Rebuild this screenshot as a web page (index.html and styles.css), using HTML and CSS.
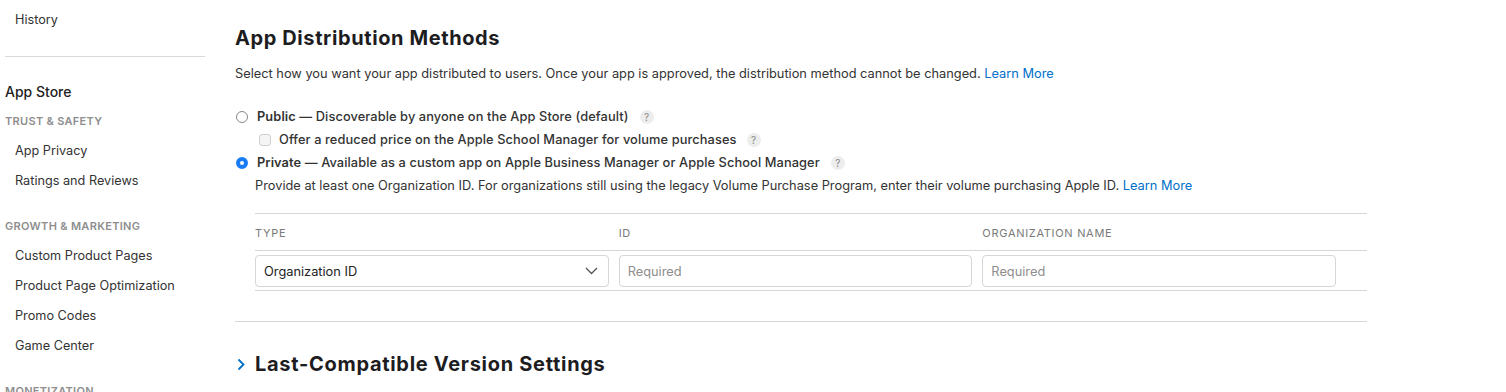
FILE: index.html
```html
<!DOCTYPE html>
<html lang="en">
<head>
    <meta charset="UTF-8">
    <title>App Distribution Methods</title>
    <link rel="stylesheet" href="styles.css">
</head>
<body>
    <div class="page">
        <nav class="sidebar">
            <a class="nav-item">History</a>
            <div class="nav-divider"></div>
            <div class="nav-section">App Store</div>
            <div class="nav-group">Trust &amp; Safety</div>
            <a class="nav-item">App Privacy</a>
            <a class="nav-item">Ratings and Reviews</a>
            <div class="nav-group">Growth &amp; Marketing</div>
            <a class="nav-item">Custom Product Pages</a>
            <a class="nav-item">Product Page Optimization</a>
            <a class="nav-item">Promo Codes</a>
            <a class="nav-item">Game Center</a>
            <div class="nav-group">Monetization</div>
        </nav>

        <main class="content">
            <h1>App Distribution Methods</h1>
            <p class="intro">Select how you want your app distributed to users. Once your app is approved, the distribution method cannot be changed. <a class="link">Learn More</a></p>

            <div class="options">
                <label class="option">
                    <span class="radio"></span>
                    <span><b>Public</b> — Discoverable by anyone on the App Store (default)</span>
                    <span class="help">?</span>
                </label>
                <label class="option sub">
                    <span class="checkbox"></span>
                    <span>Offer a reduced price on the Apple School Manager for volume purchases</span>
                    <span class="help">?</span>
                </label>
                <label class="option">
                    <span class="radio checked"></span>
                    <span><b>Private</b> — Available as a custom app on Apple Business Manager or Apple School Manager</span>
                    <span class="help">?</span>
                </label>
                <p class="option-note">Provide at least one Organization ID. For organizations still using the legacy Volume Purchase Program, enter their volume purchasing Apple ID. <a class="link">Learn More</a></p>
            </div>

            <div class="org-table">
                <div class="org-row head">
                    <div>Type</div>
                    <div>ID</div>
                    <div>Organization Name</div>
                    <div></div>
                </div>
                <div class="org-row">
                    <div class="select">
                        <span>Organization ID</span>
                        <svg width="13" height="8" viewBox="0 0 13 8"><path d="M1 1l5.5 5.5L12 1" fill="none" stroke="#555" stroke-width="1.3"/></svg>
                    </div>
                    <div class="input">Required</div>
                    <div class="input">Required</div>
                    <div></div>
                </div>
            </div>

            <div class="section-divider"></div>

            <h2 class="collapsed">
                <svg width="9" height="13" viewBox="0 0 9 13"><path d="M1.5 1.5l5 5-5 5" fill="none" stroke="#0070c9" stroke-width="1.8"/></svg>
                Last-Compatible Version Settings
            </h2>
        </main>
    </div>
</body>
</html>
```

FILE: styles.css
```css
body {
    margin: 0;
    font-family: Inter, "Noto Sans", sans-serif;
    color: #333;
    background: #fff;
    overflow: hidden;
}

.page {
    display: flex;
}

/* sidebar */

.sidebar {
    width: 200px;
    padding: 5px 0 0 5px;
    flex-shrink: 0;
    display: flex;
    flex-direction: column;
}

.nav-item {
    display: block;
    padding-left: 10px;
    height: 30px;
    line-height: 30px;
    font-size: 12.7px;
    color: #333;
}

.nav-divider {
    height: 1px;
    background: #d9d9d9;
    margin: 21px 0 23px;
}

.nav-section {
    font-size: 14px;
    font-weight: 500;
    line-height: 24px;
    color: #222;
}

.nav-group {
    margin-top: 7px;
    margin-bottom: 5px;
    line-height: 20px;
    font-size: 11px;
    font-weight: 600;
    letter-spacing: 0.3px;
    text-transform: uppercase;
    color: #8e8e8e;
}

.nav-item + .nav-group {
    margin-top: 20px;
}

/* main content */

.content {
    margin-left: 30px;
    width: 1132px;
    padding-top: 26px;
}

h1 {
    margin: 0;
    font-size: 20px;
    line-height: 24px;
    font-weight: 700;
    letter-spacing: 0.6px;
    color: #1d1d1f;
}

.intro {
    margin: 14px 0 0;
    font-size: 12.8px;
    line-height: 20px;
}

.link {
    color: #0070c9;
}

.options {
    margin-top: 21px;
    font-size: 12.8px;
}

.option {
    display: flex;
    align-items: center;
    height: 23px;
    gap: 9px;
    font-weight: 500;
    letter-spacing: 0.1px;
}

.option b {
    font-weight: 600;
}

.option.sub {
    padding-left: 24px;
    gap: 8px;
}

.radio {
    width: 12px;
    height: 12px;
    border: 1px solid #888;
    border-radius: 50%;
    margin-left: 1px;
    box-sizing: border-box;
    flex-shrink: 0;
}

.radio.checked {
    border: 4px solid #1a7cf5;
    background: #fff;
}

.checkbox {
    width: 12px;
    height: 12px;
    box-sizing: border-box;
    border: 1px solid #cfcfcf;
    border-radius: 3px;
    background: #f4f4f4;
    flex-shrink: 0;
}

.help {
    width: 14px;
    height: 14px;
    border-radius: 50%;
    background: #ededed;
    color: #888;
    font-size: 10px;
    font-weight: 400;
    line-height: 14px;
    text-align: center;
    margin-left: 2px;
}

.option-note {
    margin: 0;
    padding-left: 20px;
    line-height: 23px;
}

/* organization table */

.org-table {
    margin: 16px 0 0 20px;
    border-top: 1px solid #d6d6d6;
}

.org-row {
    display: grid;
    grid-template-columns: repeat(3, 1fr) 21px;
    gap: 10px;
    border-bottom: 1px solid #d6d6d6;
    padding: 4px 0 3px;
    font-size: 12.8px;
}

.org-row.head {
    height: 29px;
    align-items: center;
    font-size: 11px;
    letter-spacing: 0.7px;
    text-transform: uppercase;
    color: #7a7a7a;
}

.select,
.input {
    height: 32px;
    box-sizing: border-box;
    border: 1px solid #d6d6d6;
    border-radius: 4px;
    padding: 0 8px;
    display: flex;
    align-items: center;
}

.select {
    justify-content: space-between;
    padding-right: 10px;
    color: #222;
}

.input {
    color: #8e8e8e;
}

.section-divider {
    height: 1px;
    background: #d6d6d6;
    margin-top: 30px;
}

h2 {
    margin: 30px 0 0;
    font-size: 20px;
    line-height: 24px;
    font-weight: 700;
    letter-spacing: 0.7px;
    color: #1d1d1f;
    display: flex;
    align-items: center;
    gap: 9px;
    padding-left: 2px;
}
```
